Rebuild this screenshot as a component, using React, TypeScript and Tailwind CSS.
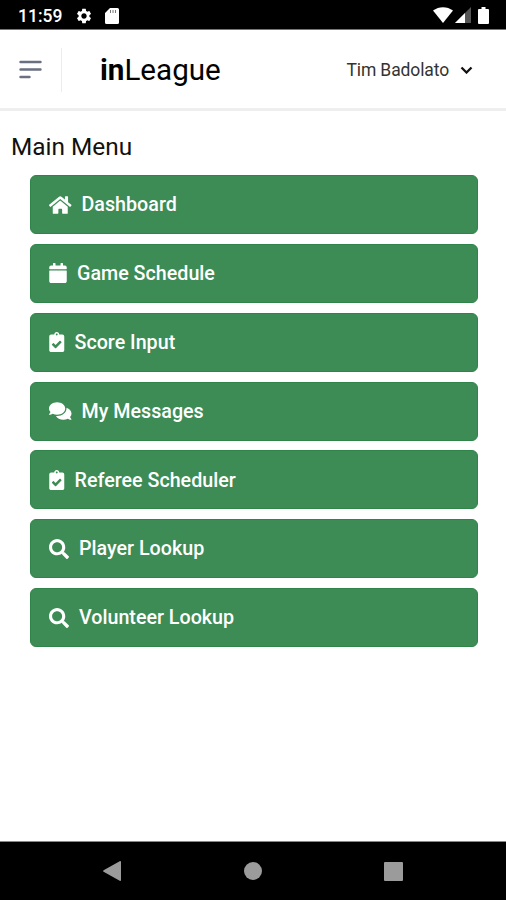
import React from "react";
import {
  FaCalendar,
  FaClipboardCheck,
  FaComments,
  FaHome,
  FaSearch,
} from "react-icons/fa";
import { MdSettings } from "react-icons/md";

const menuItems = [
  { label: "Dashboard", icon: FaHome, width: "w-[22.5px]" },
  { label: "Game Schedule", icon: FaCalendar, width: "w-[18px]" },
  { label: "Score Input", icon: FaClipboardCheck, width: "w-[15.5px]" },
  { label: "My Messages", icon: FaComments, width: "w-[22.5px]" },
  { label: "Referee Scheduler", icon: FaClipboardCheck, width: "w-[15.5px]" },
  { label: "Player Lookup", icon: FaSearch, width: "w-[20px]" },
  { label: "Volunteer Lookup", icon: FaSearch, width: "w-[20px]" },
];

const StatusBar = () => {
  return (
    <div className="flex h-[30px] items-center justify-between border-b border-[#777] bg-black pl-[18px] pr-[16px] text-white">
      <div className="flex items-center pt-[2px]">
        <span className="w-[44px] whitespace-nowrap pt-[3px] text-[17.5px] leading-none font-medium">
          11:59
        </span>
        <MdSettings className="ml-[13px] h-[18px] w-[18px]" />
        <svg className="ml-[12px] h-[16px] w-[14px]" viewBox="0 0 14 16">
          <path
            fill="#fff"
            d="M5 0h7.5A1.5 1.5 0 0 1 14 1.500v13a1.500 1.500 0 0 1-1.500 1.500h-11A1.500 1.500 0 0 1 0 14.500V5z"
          />
          <path stroke="#777" d="M5.500 2v3M8 2v3M10.500 2v3" />
        </svg>
      </div>
      <div className="flex items-center pt-px">
        <svg className="h-[16px] w-[20px]" viewBox="0 0 20 16">
          <path fill="#fff" d="M0 3.500C6-1 14-1 20 3.500L10 16z" />
        </svg>
        <svg className="ml-[2px] h-[16px] w-[16px]" viewBox="0 0 16 16">
          <path fill="#555" d="M16 0v16H0z" />
          <path fill="#fff" d="M10 6v10H0z" />
        </svg>
        <svg className="ml-[7px] mr-px h-[17px] w-[11px]" viewBox="0 0 11 17">
          <path
            fill="#fff"
            d="M3.500 0h4v2H10a1 1 0 0 1 1 1v13a1 1 0 0 1-1 1H1a1 1 0 0 1-1-1V3a1 1 0 0 1 1-1h2.500z"
          />
        </svg>
      </div>
    </div>
  );
};

const Header = () => {
  return (
    <header className="flex h-[81px] items-center border-b-[3px] border-[#eeeeee] bg-white pl-[19px] pr-[33px] pt-[2px]">
      <svg className="h-[20px] w-[23px]" viewBox="0 0 23 20">
        <path
          d="M1.500 2h20M1.500 9.500h20M1.500 17h9"
          stroke="#6b7080"
          strokeWidth="2.400"
          strokeLinecap="round"
        />
      </svg>
      <div className="ml-[19px] h-[44px] w-px bg-[#ececec]" />
      <h1 className="ml-[38px] pt-[2px] text-[29.6px] leading-none text-black">
        <span className="font-bold">in</span>League
      </h1>
      <button className="ml-auto flex items-center text-[17.5px] tracking-[-0.12px] text-[#333]">
        Tim Badolato
        <svg className="ml-[11px] h-[8px] w-[13px]" viewBox="0 0 13 8">
          <path
            d="M1.500 1.500l5 5 5-5"
            fill="none"
            stroke="#111"
            strokeWidth="2.300"
          />
        </svg>
      </button>
    </header>
  );
};

const NavigationBar = () => {
  return (
    <div className="flex h-[59px] items-center justify-between border-t border-[#888] bg-black pl-[103px] pr-[103px]">
      <svg className="h-[20px] w-[18px]" viewBox="0 0 18 20">
        <path
          fill="#9b9b9b"
          d="M16.700.200Q18-.300 18 1v18q0 1.300-1.300.800L.600 10.800Q-.300 10 .600 9.200z"
        />
      </svg>
      <div className="h-[18px] w-[18px] rounded-full bg-[#9b9b9b]" />
      <div className="h-[19px] w-[19px] rounded-[1px] bg-[#9b9b9b]" />
    </div>
  );
};

const App = () => {
  return (
    <div className="flex h-[900px] w-[506px] flex-col overflow-hidden bg-white font-[Roboto,sans-serif]">
      <StatusBar />
      <Header />
      <main className="flex-1">
        <h2 className="pl-[11px] pt-[18px] text-[24.4px] leading-[36px] text-[#111]">
          Main Menu
        </h2>
        <ul className="ml-[30px] mt-[10px] flex w-[448px] flex-col gap-[9.85px]">
          {menuItems.map(({ label, icon: Icon, width }) => (
            <li key={label}>
              <a
                href="#"
                className="flex h-[59px] items-center rounded-[6px] border border-[#2f8549] bg-[#3d8b55] pl-[18px] text-[19.7px] font-medium text-white"
              >
                <Icon className={`h-[20px] shrink-0 ${width}`} />
                <span className="ml-[10px] pt-px">{label}</span>
              </a>
            </li>
          ))}
        </ul>
      </main>
      <NavigationBar />
    </div>
  );
};

export default App;
